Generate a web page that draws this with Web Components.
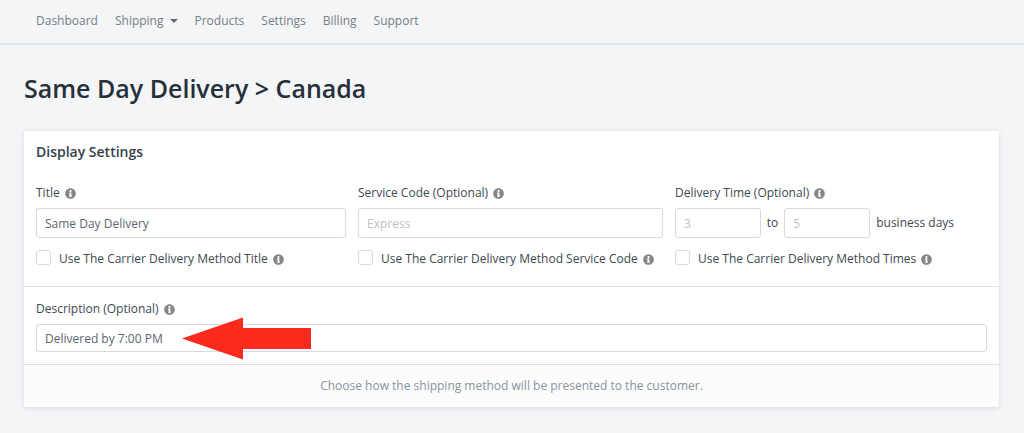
<!DOCTYPE html>
<html lang="en">
<head>
<meta charset="utf-8">
<meta name="viewport" content="width=device-width, initial-scale=1">
<title>Same Day Delivery &gt; Canada</title>
<style>
  body { margin: 0; background: #f4f5f7; color: #3d4852; font: 12px/18px "Open Sans", "Noto Sans", sans-serif; }
</style>
</head>
<body>
<app-page></app-page>
<script>
const define = (name, html, setup) => customElements.define(name, class extends HTMLElement {
  connectedCallback() {
    if (this.shadowRoot) return;
    const root = this.attachShadow({ mode: 'open' });
    const template = document.createElement('template');
    template.innerHTML = html;
    root.append(template.content.cloneNode(true));
    if (setup) setup(this, root);
  }
});

const inputStyle = `
  input.text { box-sizing: border-box; width: 100%; min-width: 0; height: 30px; margin: 0; padding: 0 8px;
    border: 1px solid #d5dae0; border-radius: 3px; background: #fff; color: #5c6670; font: inherit; outline: 0; }
  input.text::placeholder { color: #bcc2c9; opacity: 1; }`;

define('info-icon', `
  <style>
    :host { display: inline-flex; flex: none; }
    svg { width: 11px; height: 11px; display: block; }
  </style>
  <svg viewBox="0 0 512 512" aria-hidden="true"><path fill="#868686" d="M256 8C119 8 8 119 8 256s111 248 248 248 248-111 248-248S393 8 256 8zm0 80c29 0 50 21 50 48s-21 48-50 48-50-21-50-48 21-48 50-48zm68 304c0 7-5 12-12 12H200c-7 0-12-5-12-12v-34c0-7 5-12 12-12h16v-74h-16c-7 0-12-5-12-12v-34c0-7 5-12 12-12h84c7 0 12 5 12 12v120h16c7 0 12 5 12 12v34z"/></svg>`);

define('nav-bar', `
  <style>
    :host { display: block; border-bottom: 2px solid #dfe3e8; }
    nav { display: flex; gap: 17px; padding: 12px 36px 13px; }
  </style>
  <nav><slot></slot></nav>`);

define('nav-item', `
  <style>
    :host { display: block; }
    a { display: flex; align-items: center; gap: 6px; color: #748088; text-decoration: none; }
    .caret { display: none; width: 0; border: 4px solid transparent; border-top-color: #5f6a72; border-bottom: 0; }
    :host([menu]) .caret { display: block; }
  </style>
  <a href="#"><slot></slot><span class="caret"></span></a>`);

define('text-field', `
  <style>
    :host { display: block; }
    label { display: flex; align-items: center; gap: 5px; margin-bottom: 6px; }
    ${inputStyle}
    :host([compact]) input.text { height: 28px; }
    .control { position: relative; display: flex; }
  </style>
  <label for="field"><span></span><info-icon></info-icon></label>
  <div class="control"><input class="text" id="field" type="text"><slot></slot></div>`,
  (host, root) => {
    root.querySelector('label span').textContent = host.getAttribute('label');
    const input = root.querySelector('input');
    input.value = host.getAttribute('value') || '';
    input.placeholder = host.getAttribute('placeholder') || '';
  });

define('time-range', `
  <style>
    :host { display: block; }
    label.title { display: flex; align-items: center; gap: 5px; margin-bottom: 6px; }
    .control { display: grid; grid-template-columns: 86fr auto 86fr 111fr; align-items: center; gap: 6px; }
    ${inputStyle}
  </style>
  <label class="title" for="from"><span>Delivery Time (Optional)</span><info-icon></info-icon></label>
  <div class="control">
    <input class="text" id="from" type="text" placeholder="3"><label for="to">to</label>
    <input class="text" id="to" type="text" placeholder="5"><span>business days</span>
  </div>`);

define('check-field', `
  <style>
    :host { display: block; margin-top: 12px; }
    label { display: flex; align-items: flex-start; gap: 8px; white-space: nowrap; }
    input { appearance: none; box-sizing: border-box; flex: none; width: 15px; height: 15px; margin: 0;
      border: 1px solid #d5dae0; border-radius: 3px; background: #fff; }
    input:checked { background: #3490dc; }
    .caption { display: flex; align-items: center; gap: 5px; }
  </style>
  <label><input type="checkbox"><span class="caption"><slot></slot><info-icon></info-icon></span></label>`);

define('red-arrow', `
  <style>
    :host { position: absolute; left: 146px; top: -7px; pointer-events: none; }
    svg { display: block; width: 130px; height: 43px; }
  </style>
  <svg viewBox="0 0 130 43" aria-hidden="true"><path fill="#fc2a1c" d="M0 21.500 61 .5V11h68v21H61v10.500z"/></svg>`);

define('settings-card', `
  <style>
    :host { display: block; border-radius: 3px; background: #fff; box-shadow: 0 1px 5px rgba(50, 60, 75, .14); overflow: hidden; }
    header { padding: 11px 12px 0; }
    h2 { margin: 0; font-size: 14px; line-height: 20px; font-weight: 600; color: #364049; }
    .fields { display: grid; grid-template-columns: 310fr 305fr 312fr; gap: 12px; padding: 22px 12px 18px; }
    .wide { padding: 13px 12px 12px; border-top: 1px solid #dfe1e4; }
    footer { padding: 12px; border-top: 1px solid #dfe1e4; background: #fcfcfd; color: #8795a1; text-align: center; }
  </style>
  <header><h2><slot name="title"></slot></h2></header>
  <div class="fields"><slot></slot></div>
  <div class="wide"><slot name="wide"></slot></div>
  <footer><slot name="footer"></slot></footer>`);

define('app-page', `
  <style>
    :host { display: block; }
    main { padding: 24px 25px 26px 24px; }
    h1 { margin: 0 0 24px; font-size: 25px; line-height: 38px; font-weight: 600; color: #27303a; }
  </style>
  <nav-bar>
    <nav-item>Dashboard</nav-item><nav-item menu>Shipping</nav-item><nav-item>Products</nav-item>
    <nav-item>Settings</nav-item><nav-item>Billing</nav-item><nav-item>Support</nav-item>
  </nav-bar>
  <main>
    <h1>Same Day Delivery &gt; Canada</h1>
    <settings-card>
      <span slot="title">Display Settings</span>
      <div>
        <text-field label="Title" value="Same Day Delivery"></text-field>
        <check-field>Use The Carrier Delivery Method Title</check-field>
      </div>
      <div>
        <text-field label="Service Code (Optional)" placeholder="Express"></text-field>
        <check-field>Use The Carrier Delivery Method Service Code</check-field>
      </div>
      <div>
        <time-range></time-range>
        <check-field>Use The Carrier Delivery Method Times</check-field>
      </div>
      <text-field slot="wide" compact label="Description (Optional)" value="Delivered by 7:00 PM"><red-arrow></red-arrow></text-field>
      <span slot="footer">Choose how the shipping method will be presented to the customer.</span>
    </settings-card>
  </main>`);
</script>
</body>
</html>
